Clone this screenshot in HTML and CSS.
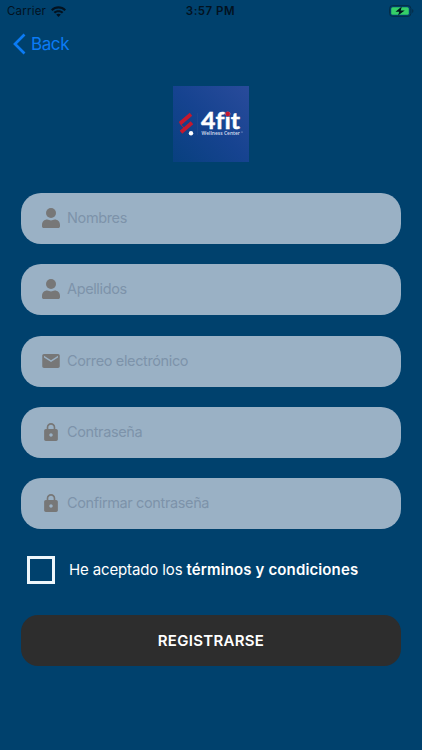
FILE: index.html
```
<!DOCTYPE html>
<html lang="es">
<head>
<meta charset="utf-8">
<meta name="viewport" content="width=device-width, initial-scale=1">
<title>Registro</title>
<link rel="stylesheet" href="styles.css">
</head>
<body>
<svg class="symbols" aria-hidden="true">
  <symbol id="user" viewBox="0 0 18 20"><circle cx="9" cy="5" r="5"/><path d="M5.300 11.600c2.300 1.100 5.100 1.100 7.400 0 3.100 0 5.300 2.200 5.300 5.300v1.300c0 1-.8 1.800-1.800 1.800H1.800C.8 20 0 19.200 0 18.200v-1.300c0-3.100 2.200-5.300 5.300-5.300z"/></symbol>
  <symbol id="mail" viewBox="2 4 20 16"><path d="M20 4H4c-1.100 0-2 .9-2 2v12c0 1.100.9 2 2 2h16c1.100 0 2-.9 2-2V6c0-1.100-.9-2-2-2zm0 4-8 5-8-5V6l8 5 8-5v2z"/></symbol>
  <symbol id="lock" viewBox="4 1 16 21"><path d="M18 8h-1V6c0-2.760-2.240-5-5-5S7 3.240 7 6v2H6c-1.100 0-2 .9-2 2v10c0 1.100.9 2 2 2h12c1.100 0 2-.9 2-2V10c0-1.100-.9-2-2-2zm-6 9c-1.100 0-2-.9-2-2s.9-2 2-2 2 .9 2 2-.9 2-2 2zm3.100-9H8.900V6c0-1.710 1.390-3.100 3.100-3.100S15.100 4.290 15.100 6v2z"/></symbol>
</svg>
<header class="status">
  <div class="carrier"><span>Carrier</span>
    <svg class="wifi" viewBox="0 0 15 11"><path d="M0 3.500C4.200-.8 10.800-.8 15 3.500L13.500 5C10.100 1.700 4.900 1.700 1.500 5z"/><path d="M2.600 6.100c2.800-2.600 7-2.600 9.800 0l-1.500 1.500c-1.900-1.800-4.900-1.800-6.800 0z"/><path d="M5.200 8.600c1.300-1.200 3.300-1.200 4.600 0L7.500 11z"/></svg>
  </div>
  <div class="time">3:57 PM</div>
  <svg class="battery" viewBox="0 0 25 12"><rect x=".6" y=".6" width="21.300" height="10.800" rx="3" fill="none" stroke="#052c46" stroke-width="1"/><rect x="2.200" y="2.200" width="17.600" height="7.600" rx="1.500" fill="#35cf68"/><path d="M23.200 4v4c1.600-.8 1.600-3.200 0-4z" fill="#052c46"/><path d="M12.800 1.600 6.500 6.700h3.800L9 10.500l6.700-5.100h-4z" fill="#00141f"/></svg>
</header>
<nav class="nav">
  <a class="back"><svg viewBox="0 0 13 22"><path d="M11.500 1.500 2 11l9.500 9.500"/></svg><span>Back</span></a>
</nav>
<main>
  <svg class="logo" viewBox="0 0 76 76" role="img" aria-label="4fit Wellness Center">
    <defs><linearGradient id="tile" x1="0" y1="1" x2="1" y2="0"><stop offset="0" stop-color="#08407f"/><stop offset=".5" stop-color="#164390"/><stop offset="1" stop-color="#294b9b"/></linearGradient></defs>
    <rect width="76" height="76" fill="url(#tile)"/>
    <path d="M24.500 27v22" stroke="#2b4f91" stroke-width=".5"/>
    <g stroke="#c5182e" stroke-width="3.800"><path d="m7 37.500 11-9.200M8 46.300l11-9.500"/></g>
    <path d="m7 37.500 4.500 5" stroke="#c5182e" stroke-width="1"/>
    <circle cx="18" cy="47.200" r="2.200" fill="#fff"/>
    <text class="brand" x="28" y="42.500" textLength="39" lengthAdjust="spacingAndGlyphs">4fit</text>
    <circle cx="54.700" cy="28" r="2.400" fill="#c5182e"/>
    <text class="tagline" x="28.500" y="49.200" textLength="38.500" lengthAdjust="spacingAndGlyphs">Wellness Center</text>
    <circle cx="69" cy="46" r=".6" fill="#b4c2df"/>
  </svg>
  <form class="form">
    <div class="field"><svg class="user"><use href="#user"/></svg><span>Nombres</span></div>
    <div class="field"><svg class="user"><use href="#user"/></svg><span>Apellidos</span></div>
    <div class="field"><svg class="mail"><use href="#mail"/></svg><span>Correo electrónico</span></div>
    <div class="field"><svg class="lock"><use href="#lock"/></svg><span>Contraseña</span></div>
    <div class="field"><svg class="lock"><use href="#lock"/></svg><span>Confirmar contraseña</span></div>
  </form>
  <div class="terms"><span class="checkbox" role="checkbox" aria-checked="false"></span><p>He aceptado los <b>términos y condiciones</b></p></div>
  <button class="submit">REGISTRARSE</button>
</main>
</body>
</html>
```
FILE: styles.css
```
* { box-sizing: border-box; }
body { margin: 0; height: 750px; overflow: hidden; background: #00416d; color: #fff; font-family: Inter, "Liberation Sans", sans-serif; }
.symbols { display: none; }
.status { height: 22px; padding: 0 8px 0 7px; display: grid; grid-template-columns: 1fr auto 1fr; align-items: center; color: #03121f; font-size: 11.5px; }
.carrier { display: flex; align-items: center; gap: 5px; letter-spacing: .2px; }
.wifi { width: 15px; height: 11px; fill: #03121f; }
.time { font-weight: 600; letter-spacing: .5px; }
.battery { width: 25px; height: 12px; justify-self: end; }
.nav { height: 43px; padding-left: 13px; display: flex; align-items: center; }
.back { display: flex; align-items: center; gap: 5px; color: #0b7bf5; font-size: 17px; letter-spacing: -.4px; }
.back svg { width: 13px; height: 22px; fill: none; stroke: #0b7bf5; stroke-width: 2.700; }
main { padding: 21px 21px 0; display: flex; flex-direction: column; }
.logo { width: 76px; height: 76px; align-self: center; }
.brand { font: 700 22px Lato, sans-serif; font-variant-ligatures: none; fill: #fff; stroke: #fff; stroke-width: .4; }
.tagline { font: 600 5px "Open Sans", sans-serif; fill: #d5deee; }
.form { margin-top: 31px; display: grid; gap: 20.300px; }
.field { height: 51px; border-radius: 20px; background: #9ab1c5; padding: 0 0 1px 21px; display: flex; align-items: center; color: #7d93aa; font-size: 14.500px; letter-spacing: -.37px; }
.field svg { fill: #777777; margin-right: 7px; }
.field span { margin-bottom: 1px; }
.user { width: 18px; height: 20px; }
.field .mail { width: 18px; height: 14px; margin-top: 1px; }
.field .lock { width: 14px; height: 18px; margin: 0 9px 0 2px; }
.terms { height: 31px; margin-top: 25px; display: flex; align-items: center; padding-left: 6px; }
.checkbox { width: 28px; height: 28px; border: 3px solid #eef6fb; }
.terms p { margin: 0 0 0 14px; font-size: 15px; letter-spacing: -.13px; white-space: nowrap; }
.terms b { font-weight: 600; letter-spacing: .13px; }
.submit { height: 51px; margin-top: 30px; padding: 0; border: 0; border-radius: 17px; background: #2d2d2d; color: #fff; font: 600 15px Inter, "Liberation Sans", sans-serif; letter-spacing: .3px; }
```
